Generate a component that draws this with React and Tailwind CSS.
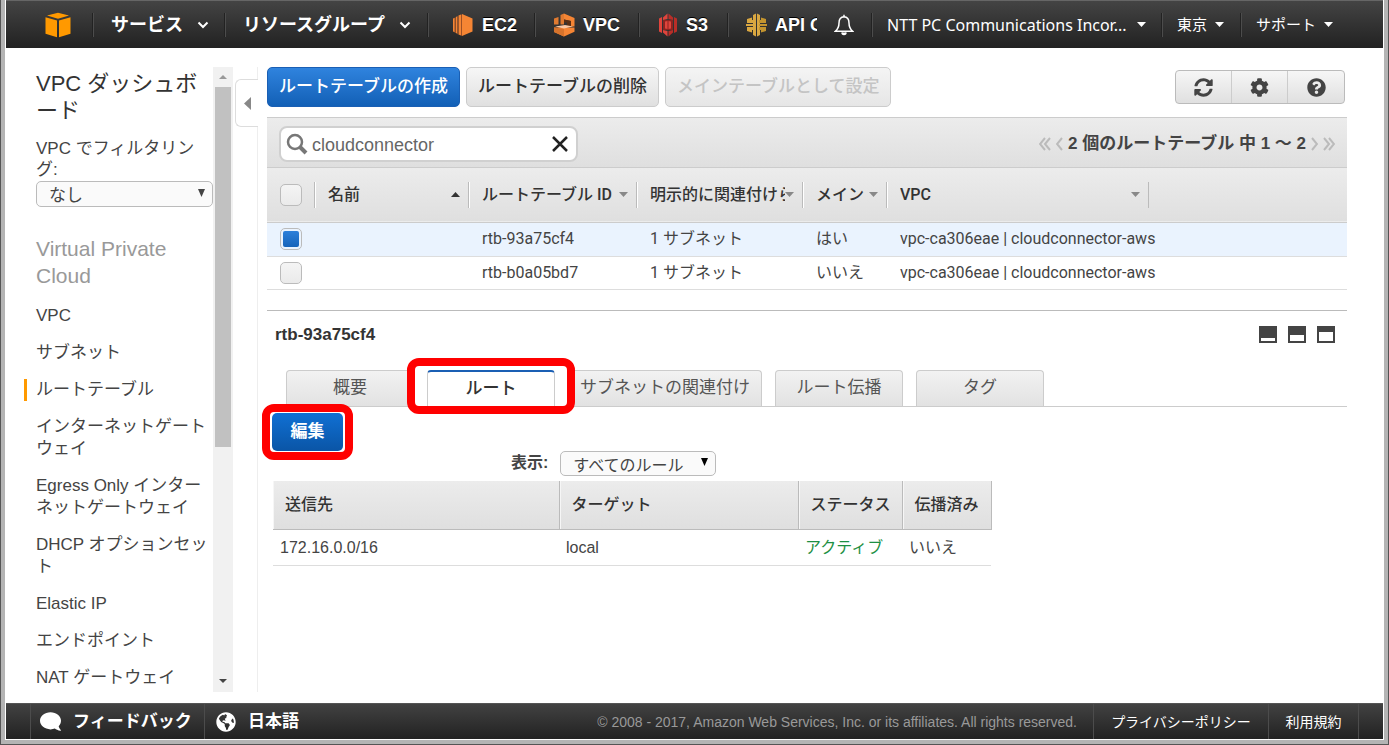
import React from 'react';
import { FaSyncAlt, FaCog, FaQuestionCircle, FaComment, FaGlobeAmericas } from 'react-icons/fa';

const SERVICES = [
  { name: 'EC2', icon: Ec2Icon, width: 'w-[105px] pl-[23px]' },
  { name: 'VPC', icon: VpcIcon, width: 'w-[102px] pl-[17px]' },
  { name: 'S3', icon: S3Icon, width: 'w-[87px] pl-[18px]' },
];

const NAV_ITEMS = [
  { label: 'VPC' },
  { label: 'サブネット' },
  { label: 'ルートテーブル', active: true },
  { label: 'インターネットゲートウェイ' },
  { label: 'Egress Only インターネットゲートウェイ' },
  { label: 'DHCP オプションセット' },
  { label: 'Elastic IP' },
  { label: 'エンドポイント' },
  { label: 'NAT ゲートウェイ' },
];

const COLUMNS = [
  { label: '名前', sort: 'asc' },
  { label: 'ルートテーブル ID', sort: 'none' },
  { label: '明示的に関連付けら', sort: 'none' },
  { label: 'メイン', sort: 'none' },
  { label: 'VPC', sort: 'none' },
];

const ROUTE_TABLES = [
  { id: 'rtb-93a75cf4', subnets: '1 サブネット', main: 'はい', vpc: 'vpc-ca306eae | cloudconnector-aws', selected: true },
  { id: 'rtb-b0a05bd7', subnets: '1 サブネット', main: 'いいえ', vpc: 'vpc-ca306eae | cloudconnector-aws', selected: false },
];

const TABS = [
  { label: '概要' },
  { label: 'ルート', active: true },
  { label: 'サブネットの関連付け' },
  { label: 'ルート伝播' },
  { label: 'タグ' },
];

const ROUTE_HEADERS = ['送信先', 'ターゲット', 'ステータス', '伝播済み'];

function CubeLogo() {
  return (
    <svg viewBox="0 0 26 26" className="h-[26px] w-[26px]" fill="#f90">
      <path d="M2 3.500 13 .8l11 2.700-11 3.200z" />
      <path d="M.5 5.300 12 8.500v16.700L.5 21.800z" />
      <path d="M25.500 5.300 14 8.500v16.700l11.500-3.400z" />
    </svg>
  );
}

function Ec2Icon() {
  return (
    <svg viewBox="0 0 22 24" className="h-6 w-[22px]">
      <path d="M10 1 20.500 5.500v13L10 23z" fill="#f58534" />
      <path d="M6.500 2.500 9 1.500v21l-2.500-1zM3.800 4 5.500 3.200v17.600L3.800 20zM1 5.500l1.800-.8v14.600L1 18.500z" fill="#f58534" />
      <path d="M9 1.500h1v21.200H9zM5.500 3.200h1v18h-1zM2.800 4.700h1V20h-1z" fill="#9d5025" />
    </svg>
  );
}

function VpcIcon() {
  return (
    <svg viewBox="0 0 22 24" className="h-6 w-[22px]">
      <path d="M11 .5 21.500 5v8.500H18V8l-7-1.500z" fill="#f58534" />
      <path d="M11 .5 7.500 2v9.500H11zM1 5.500 5.500 4v7.500H1z" fill="#e07a30" />
      <path d="M11 6.500 18 8v5h-4V9.500h-3z" fill="#5a3015" />
      <path d="M1 14.500h20.500v4.300L11 23.500 1 19z" fill="#f58534" />
      <path d="M2 13.500 12 12l8 1.500-9 2z" fill="#fbc9a5" />
      <path d="M1 14.500 11 16v7.500L1 19z" fill="#d6732c" />
    </svg>
  );
}

function S3Icon() {
  return (
    <svg viewBox="0 0 20 24" className="h-6 w-5">
      <path d="M1 5.500 4 4v16l-3-1.500zM5 4.500l4.500-4V6L5 7zM5 19.500l4.500 4V18L5 17z" fill="#e0443c" />
      <path d="M19 5.500 16 4v16l3-1.500zM15 4.500l-4.500-4V6L15 7zM15 19.500l-4.500 4V18l4.500-1z" fill="#b92e28" />
      <path d="M5 7h10v10H5z" fill="#8c2420" />
      <path d="M7 8.500 9.500 8v8L7 15.500zM10.500 8l2.500.5v7l-2.500.5z" fill="#e0443c" />
    </svg>
  );
}

function ApiIcon() {
  return (
    <svg viewBox="0 0 21 24" className="h-6 w-[21px]" fill="#d9a741">
      <path d="M7 2 10 .5v23L7 22zM11 .5 14 2v20l-3 1.500z" />
      <path d="M1 6 6 4.500V7h2v3H1zM1 18l5 1.500V17h2v-3H1zM0 11h8v2H0z" />
      <path d="M20 6 15 4.500V7h-2v3h7zM20 18l-5 1.500V17h-2v-3h7zM13 11h8v2h-8z" fill="#c3942f" />
    </svg>
  );
}

function BellIcon() {
  return (
    <svg viewBox="0 0 20 22" className="h-[22px] w-5" fill="none" stroke="#fff" strokeWidth="1.5">
      <path d="M10 2.800C6.500 3 5 5.500 5 9c0 4.500-1 6-3.700 8.300h17.400C16 15 15 13.500 15 9c0-3.500-1.500-6-5-6.200z" />
      <path d="M10 .8v2" />
      <path d="M8 18.500a2 2 0 0 0 4 0" fill="#fff" />
    </svg>
  );
}

function ChevronIcon() {
  return (
    <svg viewBox="0 0 12 8" className="h-2 w-3" fill="none" stroke="#fff" strokeWidth="2">
      <path d="M1.500 1.500 6 6l4.500-4.500" />
    </svg>
  );
}

function Caret({ className = 'h-[5px] w-[9px] text-white' }) {
  return (
    <svg viewBox="0 0 10 6" preserveAspectRatio="none" className={className} fill="currentColor">
      <path d="M0 0h10L5 6z" />
    </svg>
  );
}

function Divider() {
  return <span className="h-6 w-[2px] shrink-0 border-l border-r border-l-[#222] border-r-[#4c4c4c]" />;
}

function TopBar() {
  return (
    <header className="flex h-12 shrink-0 items-center border-t border-[#666] bg-linear-to-b from-[#444] to-[#222] text-white [text-shadow:0_-1px_0_#000]">
      <a href="#home" aria-label="AWS" className="flex w-[86px] shrink-0 justify-center pl-[18px]"><CubeLogo /></a>
      <Divider />
      <button type="button" className="flex w-[130px] shrink-0 items-center gap-[14px] pl-[17px] text-lg font-bold">
        サービス <ChevronIcon />
      </button>
      <Divider />
      <button type="button" className="flex w-[201px] shrink-0 items-center gap-[14px] pl-[17px] text-lg font-bold">
        リソースグループ <ChevronIcon />
      </button>
      <Divider />
      <nav className="flex min-w-0 flex-1 items-center overflow-hidden">
        {SERVICES.map((service) => (
          <React.Fragment key={service.name}>
            <a href="#service" className={`flex shrink-0 items-center gap-2 text-lg font-bold ${service.width}`}>
              <service.icon />
              {service.name}
            </a>
            <Divider />
          </React.Fragment>
        ))}
        <a href="#service" className="flex shrink-0 items-center gap-2 pl-[17px] text-lg font-bold whitespace-nowrap">
          <ApiIcon />
          API Gateway
        </a>
      </nav>
      <button type="button" aria-label="通知" className="flex w-[54px] shrink-0 items-center justify-center"><BellIcon /></button>
      <Divider />
      <div className="flex shrink-0 items-center font-['Noto_Sans','Noto_Sans_CJK_JP',sans-serif] text-[15px]">
        <button type="button" className="flex w-[288px] items-center justify-between pr-[15px] pl-[14px] text-base">
          NTT PC Communications Incor... <Caret />
        </button>
        <Divider />
        <button type="button" className="flex w-[77px] items-center gap-2 pl-[14px]">東京 <Caret /></button>
        <Divider />
        <button type="button" className="flex w-[141px] items-center gap-2 pl-[14px]">サポート <Caret /></button>
      </div>
    </header>
  );
}

function Sidebar() {
  return (
    <aside className="flex w-[252px] shrink-0 border-r border-[#eee]">
      <div className="flex-1 overflow-hidden pl-[30px] text-[17px] text-[#444] [line-break:loose]">
        <h1 className="mt-[3px] w-[174px] text-[22px] leading-[27px] text-[#333]">VPC ダッシュボード</h1>
        <label htmlFor="vpc-filter" className="mt-[14px] block w-[174px] leading-[21px]">VPC でフィルタリング:</label>
        <div className="relative mt-[1px] w-[177px]">
          <select id="vpc-filter" className="block h-[26px] w-full appearance-none rounded-[5px] border border-[#bbb] bg-[#fafafa] pt-1 pl-3 leading-5">
            <option>なし</option>
          </select>
          <Caret className="pointer-events-none absolute top-2 right-2 h-2 w-[7px]" />
        </div>
        <h2 className="mt-7 text-[21px] leading-[27px] text-[#999]">Virtual Private Cloud</h2>
        <ul className="mt-4 space-y-[15px] leading-[22px]">
          {NAV_ITEMS.map((item) => (
            <li key={item.label} className={item.active ? '-ml-3 border-l-[3px] border-[#f90] pl-[9px]' : ''}>
              <a href="#nav" className="block w-[174px]">{item.label}</a>
            </li>
          ))}
        </ul>
      </div>
      {/* Scrollbar */}
      <div className="flex w-5 flex-col items-center justify-between bg-[#f1f1f1]">
        <div className="flex h-5 items-center">
          <Caret className="h-1 w-2 rotate-180 text-[#999]" />
        </div>
        <div className="h-[360px] w-4 bg-[#c1c1c1]" />
        <div className="flex flex-1 items-end pb-[9px]">
          <Caret className="h-1 w-2 text-[#444]" />
        </div>
      </div>
      <button type="button" aria-label="閉じる" className="mt-3 -mr-px ml-[2px] flex h-12 w-[23px] items-center justify-center rounded-l-md border border-r-0 border-[#ddd] bg-white">
        <svg viewBox="0 0 7 13" className="h-[13px] w-[7px]" fill="#888"><path d="M7 0v13L0 6.500z" /></svg>
      </button>
    </aside>
  );
}

function Toolbar() {
  const button = 'h-10 rounded-[5px] border px-[11px] text-[17px] font-medium bg-linear-to-b';
  const iconButton = 'flex w-14 items-center justify-center';
  return (
    <div className="flex items-center">
      <div className="flex gap-[6px]">
        <button type="button" className={`${button} border-[#1a5fb4] from-[#2f83de] to-[#1260b6] font-bold text-white`}>ルートテーブルの作成</button>
        <button type="button" className={`${button} border-[#ccc] from-[#f6f6f6] to-[#e0e0e0] text-[#333]`}>ルートテーブルの削除</button>
        <button type="button" disabled className={`${button} border-[#ccc] from-[#f4f4f4] to-[#e6e6e6] text-[#c4c4c4]`}>メインテーブルとして設定</button>
      </div>
      <div className="mr-[2px] ml-auto flex h-[34px] divide-x divide-[#ccc] rounded border border-[#bbb] bg-linear-to-b from-[#f6f6f6] to-[#e0e0e0] text-[19px] text-[#444]">
        <button type="button" aria-label="更新" className={iconButton}><FaSyncAlt /></button>
        <button type="button" aria-label="設定" className={iconButton}><FaCog /></button>
        <button type="button" aria-label="ヘルプ" className={iconButton}><FaQuestionCircle /></button>
      </div>
    </div>
  );
}

function PageArrow({ double, next, label }) {
  return (
    <button type="button" aria-label={label} className={next ? 'rotate-180' : ''}>
      <svg viewBox={double ? '0 0 12 14' : '0 0 7 14'} className={double ? 'h-[14px] w-3' : 'h-[14px] w-[7px]'} fill="none" stroke="#bbb" strokeWidth="2">
        <path d="M6 1 1 7l5 6" />
        {double && <path d="M11 1 6 7l5 6" />}
      </svg>
    </button>
  );
}

function SearchBar() {
  return (
    <div className="mt-[10px] flex h-[51px] items-center justify-between border-t border-b border-[#ccc] bg-linear-to-b from-[#ececec] to-[#dfdfdf] px-3 pt-[2px]">
      <div className="flex h-9 w-[299px] items-center gap-1 rounded-lg border-2 border-[#d0d0d0] bg-white px-[5px]">
        <svg viewBox="0 0 22 22" className="h-[22px] w-[22px] shrink-0" fill="none" stroke="#777">
          <circle cx="9" cy="9" r="7" strokeWidth="2.500" />
          <path d="m14 14 6 6" strokeWidth="4" />
        </svg>
        <input type="text" aria-label="検索" defaultValue="cloudconnector" className="min-w-0 flex-1 pt-[2px] text-lg leading-6 text-[#666] outline-none" />
        <button type="button" aria-label="クリア" className="mr-[2px]">
          <svg viewBox="0 0 18 18" className="h-[18px] w-[18px]" fill="none" stroke="#222" strokeWidth="2.500"><path d="m2 2 14 14M16 2 2 16" /></svg>
        </button>
      </div>
      <div className="flex items-center gap-[5px]">
        <PageArrow double label="最初" />
        <PageArrow label="前へ" />
        <span className="text-[17px] font-bold text-[#444]">2 個のルートテーブル 中 1 ～ 2</span>
        <PageArrow next label="次へ" />
        <PageArrow double next label="最後" />
      </div>
    </div>
  );
}

function Checkbox({ checked = false, label }) {
  return (
    <input
      type="checkbox"
      aria-label={label}
      defaultChecked={checked}
      className="ml-[13px] block h-[22px] w-[22px] appearance-none rounded-[5px] border border-[#bbb] bg-linear-to-b from-[#f4f4f4] to-[#eaeaea] bg-clip-content p-0 checked:from-[#2f83de] checked:to-[#1260b6] checked:p-[2px]"
    />
  );
}

function RouteTableList() {
  return (
    <table className="w-full table-fixed border-b border-[#ddd] text-left font-['Roboto','Noto_Sans_CJK_JP',sans-serif] text-base text-[#444]">
      <colgroup>
        <col className="w-[47px]" />
        <col className="w-[154px]" />
        <col className="w-[168px]" />
        <col className="w-[166px]" />
        <col className="w-[84px]" />
        <col className="w-[263px]" />
        <col />
      </colgroup>
      <thead>
        <tr className="h-[54px] border-b border-[#ccc] bg-linear-to-b from-[#ececec] to-[#dfdfdf]">
          <th className="p-0"><Checkbox label="すべて選択" /></th>
          {COLUMNS.map((column, index) => (
            <th key={column.label} className="p-0 font-medium text-[#333]">
              <div className={`flex h-[26px] items-center justify-between border-l border-[#bbb] pr-2 pl-[13px] shadow-[inset_1px_0_0_#fff] ${index === 4 ? 'border-r' : ''}`}>
                <span className="min-w-0 overflow-hidden whitespace-nowrap">{column.label}</span>
                <Caret className={column.sort === 'asc' ? 'h-[5px] w-[9px] shrink-0 rotate-180 text-[#333]' : 'h-[5px] w-[9px] shrink-0 text-[#888]'} />
              </div>
            </th>
          ))}
          <th className="p-0" />
        </tr>
      </thead>
      <tbody>
        {ROUTE_TABLES.map((row) => (
          <tr key={row.id} className={row.selected ? 'h-[34px] border-b border-[#ddd] bg-[#eaf3fe]' : 'h-[33px]'}>
            <td className="p-0"><Checkbox checked={row.selected} label={row.id} /></td>
            <td />
            <td className="py-0 pr-0 pl-[14px]">{row.id}</td>
            <td className="py-0 pr-0 pl-[14px]">{row.subnets}</td>
            <td className="py-0 pr-0 pl-[14px]">{row.main}</td>
            <td className="py-0 pr-0 pl-[14px] whitespace-nowrap">{row.vpc}</td>
            <td />
          </tr>
        ))}
      </tbody>
    </table>
  );
}

// Red frame that points at the control to click
function Highlight({ className }) {
  return <span className={`pointer-events-none absolute z-10 rounded-[12px] border-8 border-[#f00] ${className}`} />;
}

function Tabs() {
  return (
    <div role="tablist" className="mt-[25px] flex h-[37px] gap-[13px] border-b border-[#ccc] pl-[19px] text-[17px] text-[#555]">
      {TABS.map((tab) => (
        <div key={tab.label} className="relative">
          <button
            type="button"
            role="tab"
            aria-selected={!!tab.active}
            className={
              tab.active
                ? 'h-[37px] w-32 rounded-t border border-t-2 border-b-0 border-[#ccc] border-t-[#1a5fb4] bg-white font-medium text-[#333]'
                : 'h-9 min-w-32 rounded-t border border-b-0 border-[#ccc] bg-linear-to-b from-[#f2f2f2] to-[#e2e2e2] px-[11px] whitespace-nowrap'
            }
          >
            {tab.label}
          </button>
          {tab.active && <Highlight className="-inset-x-5 -top-3 -bottom-2" />}
        </div>
      ))}
    </div>
  );
}

function Detail() {
  return (
    <section className="mt-5 border-t border-[#bbb]">
      <div className="mt-[14px] flex items-center justify-between pr-3 pl-2">
        <h2 className="text-[17px] leading-5 font-bold text-[#333]">rtb-93a75cf4</h2>
        <div className="flex gap-[11px]">
          {['h-[3px]', 'h-[6px]', 'h-[9px]'].map((height) => (
            <button key={height} type="button" aria-label="パネルサイズ" className="flex h-[17px] w-[18px] items-end bg-[#444] p-[2px]">
              <span className={`w-full bg-white ${height}`} />
            </button>
          ))}
        </div>
      </div>
      <Tabs />
      <div className="relative mt-[6px] ml-[5px] w-[71px]">
        <button type="button" className="block h-[38px] w-full rounded-[5px] bg-linear-to-b from-[#1070d4] to-[#0a55a6] text-[17px] font-bold text-white">編集</button>
        <Highlight className="-inset-x-[10px] -inset-y-[9px]" />
      </div>
      <div className="ml-[244px] flex items-center gap-3 text-base">
        <label htmlFor="rule-filter" className="font-bold text-[#444]">表示:</label>
        <div className="relative w-[156px]">
          <select id="rule-filter" className="block h-[25px] w-full appearance-none rounded-[5px] border border-[#bbb] bg-[#fafafa] pt-1 pl-3 leading-5 text-[#444]">
            <option>すべてのルール</option>
          </select>
          <Caret className="pointer-events-none absolute top-[7px] right-2 h-2 w-[7px]" />
        </div>
      </div>
      <table className="mt-[5px] ml-[6px] w-[718px] table-fixed border-b border-[#ddd] text-left text-base text-[#444]">
        <colgroup>
          <col className="w-[286px]" />
          <col className="w-[239px]" />
          <col className="w-[104px]" />
          <col className="w-[89px]" />
        </colgroup>
        <thead>
          <tr className="h-[49px] border-b border-[#bbb] bg-linear-to-b from-[#ececec] to-[#dfdfdf]">
            {ROUTE_HEADERS.map((header) => (
              <th key={header} className="border-r border-[#bbb] py-0 pr-0 pl-3 font-medium text-[#333] shadow-[inset_1px_0_0_#f6f6f6]">{header}</th>
            ))}
          </tr>
        </thead>
        <tbody>
          <tr className="h-9">
            <td className="py-0 pr-0 pl-[7px]">172.16.0.0/16</td>
            <td className="py-0 pr-0 pl-[7px]">local</td>
            <td className="py-0 pr-0 pl-[7px] text-[#1d8f43]">アクティブ</td>
            <td className="py-0 pr-0 pl-[7px]">いいえ</td>
          </tr>
        </tbody>
      </table>
    </section>
  );
}

function Footer() {
  return (
    <footer className="flex h-9 shrink-0 items-center border-t border-[#555] bg-linear-to-b from-[#424242] to-[#222] text-white">
      <div className="flex h-full flex-1 divide-x divide-[#4c4c4c] text-[17px] font-bold">
        <span className="w-[25px]" />
        <a href="#feedback" className="flex w-[174px] items-center gap-3 pl-[9px]"><FaComment className="-scale-x-100 text-[21px]" />フィードバック</a>
        <a href="#lang" className="flex w-[107px] items-center gap-3 pl-[11px]"><FaGlobeAmericas className="text-xl" />日本語</a>
      </div>
      <small className="pr-4 text-sm text-[#999]">© 2008 - 2017, Amazon Web Services, Inc. or its affiliates. All rights reserved.</small>
      <div className="flex h-full divide-x divide-[#4c4c4c] border-l border-[#4c4c4c] text-sm">
        <a href="#privacy" className="flex w-[175px] items-center justify-center">プライバシーポリシー</a>
        <a href="#terms" className="flex w-[90px] items-center justify-center">利用規約</a>
        <span className="w-6" />
      </div>
    </footer>
  );
}

export default function App() {
  return (
    <div lang="ja" className="h-screen border-x border-b border-[#555] bg-white font-['Liberation_Sans','Noto_Sans_CJK_JP',sans-serif]">
      {/* Window frame */}
      <div className="h-full border-x-4 border-b-4 border-[#b4b4b4]">
        <div className="flex h-full flex-col border-x border-b border-white">
          <TopBar />
          <div className="flex min-h-0 flex-1 pt-[19px] pb-[11px]">
            <Sidebar />
            <main className="min-w-0 flex-1 pr-9 pl-[9px]">
              <Toolbar />
              <SearchBar />
              <RouteTableList />
              <Detail />
            </main>
          </div>
          <Footer />
        </div>
      </div>
    </div>
  );
}
